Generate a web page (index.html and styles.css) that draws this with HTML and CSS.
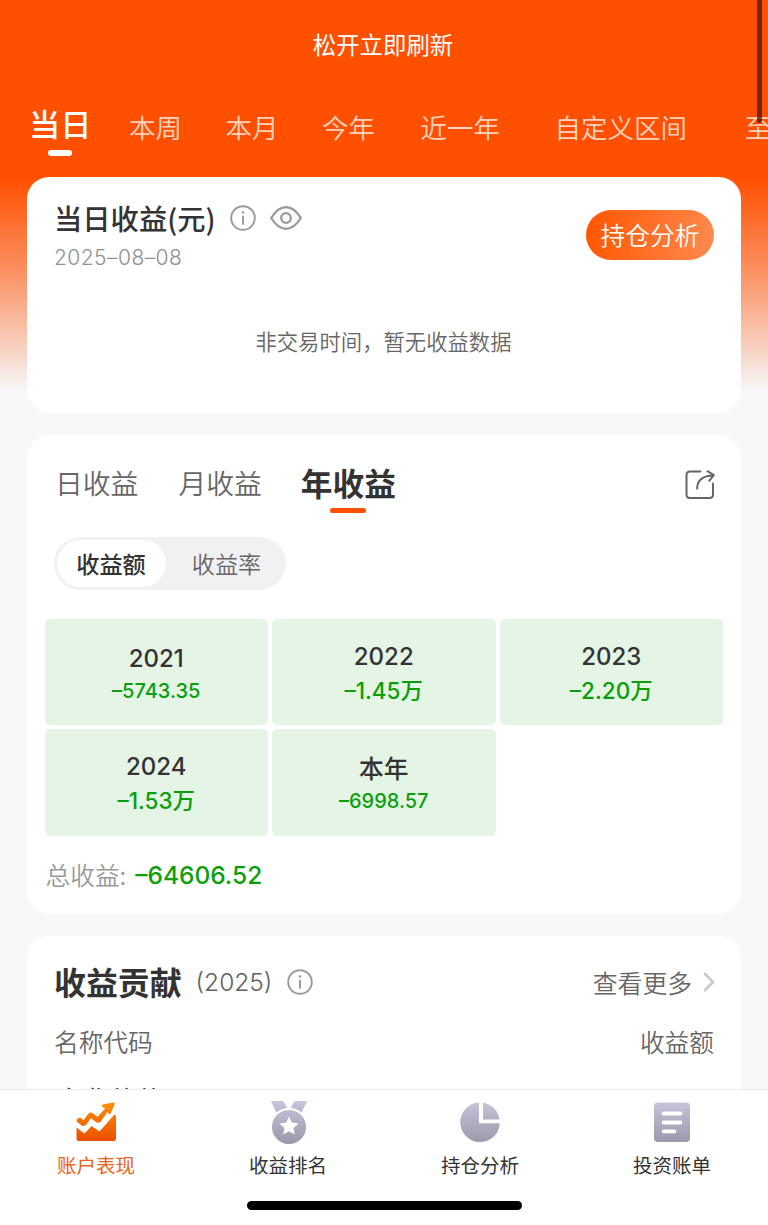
FILE: index.html
```html
<!DOCTYPE html>
<html lang="zh-CN">
<head>
<meta charset="utf-8">
<title>账户表现</title>
<link rel="stylesheet" href="styles.css">
</head>
<body>
<div class="app">
  <div class="scrollbar"></div>
  <main class="page">
    <p class="refresh">松开立即刷新</p>
    <nav class="periods">
      <a class="period period-active">当日</a>
      <a class="period">本周</a>
      <a class="period">本月</a>
      <a class="period">今年</a>
      <a class="period period-year">近一年</a>
      <a class="period period-custom">自定义区间</a>
      <a class="period period-last">至</a>
    </nav>

    <section class="card today">
      <div class="today-head">
        <div>
          <div class="today-title">
            <h2>当日收益(元)</h2>
            <svg class="info" viewBox="0 0 26 26"><circle cx="13" cy="13" r="11.8"/><path d="M13 10.800v9"/><circle class="dot" cx="13" cy="7.400" r="1.200"/></svg>
            <svg class="eye" viewBox="0 0 32 24"><path d="M1.200 12C5.500 5 10.500 1.200 16 1.200S26.500 5 30.800 12C26.500 19 21.500 22.800 16 22.800S5.500 19 1.200 12Z"/><circle cx="16" cy="12" r="4.800"/></svg>
          </div>
          <div class="date">2025–08–08</div>
        </div>
        <a class="analyse">持仓分析</a>
      </div>
      <p class="empty">非交易时间，暂无收益数据</p>
    </section>

    <section class="card history">
      <div class="history-head">
        <a class="range">日收益</a>
        <a class="range">月收益</a>
        <a class="range range-active">年收益</a>
        <svg class="share" viewBox="0 0 30 30"><path d="M15.500 1.500H5Q1.500 1.500 1.500 5V24.500Q1.500 28 5 28H24.500Q28 28 28 24.500V13.500"/><path d="M12.200 18.500C12 9.500 18 5.800 28.500 5.200M22.500 1.200L28.800 5.200L24.200 10.800"/></svg>
      </div>
      <div class="segment">
        <span class="seg seg-on">收益额</span>
        <span class="seg">收益率</span>
      </div>
      <div class="years">
        <div class="year year-exact"><b>2021</b><i>–5743.35</i></div>
        <div class="year"><b>2022</b><i>–1.45<em>万</em></i></div>
        <div class="year"><b>2023</b><i>–2.20<em>万</em></i></div>
        <div class="year"><b>2024</b><i>–1.53<em>万</em></i></div>
        <div class="year year-exact"><b class="han">本年</b><i>–6998.57</i></div>
      </div>
      <div class="total"><span>总收益:</span><strong>–64606.52</strong></div>
    </section>

    <section class="card contrib">
      <div class="contrib-head">
        <h2>收益贡献</h2>
        <span class="contrib-year">(2025)</span>
        <svg class="info" viewBox="0 0 26 26"><circle cx="13" cy="13" r="11.800"/><path d="M13 10.800v9"/><circle class="dot" cx="13" cy="7.400" r="1.200"/></svg>
        <a class="more">查看更多</a>
        <svg class="chevron" viewBox="0 0 12 20"><path d="M1.200 1L10 10L1.200 19"/></svg>
      </div>
      <div class="columns"><span>名称代码</span><span>收益额</span></div>
      <div class="stock">东华软件</div>
    </section>
  </main>

  <footer class="tabbar">
    <svg class="defs" width="0" height="0"><defs>
      <linearGradient id="warm" x1="0" y1="0" x2="0" y2="40" gradientUnits="userSpaceOnUse"><stop offset="0" stop-color="#fb9500"/><stop offset="1" stop-color="#eb5000"/></linearGradient>
      <linearGradient id="cool" x1="0" y1="0" x2="0" y2="42" gradientUnits="userSpaceOnUse"><stop offset="0" stop-color="#c8c6dc"/><stop offset="1" stop-color="#9b99aa"/></linearGradient>
    </defs></svg>
    <div class="tabs">
      <a class="tab tab-on">
        <svg viewBox="0 0 44 44"><g fill="url(#warm)"><path d="M2.500 27.500L10.500 33.500L17.500 26L25.500 31.500L39.500 15.500Q42 13.500 42 17V38.500Q42 41 39.500 41H5Q2.500 41 2.500 38.500Z"/><path d="M2.600 21.500C2.600 18 5.500 16.700 7.700 18.600L9.500 20.200L14 14.200Q16 11.300 19 13.400L23.600 16.700L31.200 8.600L28.300 6.800Q27 5 29.500 4.200L39.500 2.600Q41.300 2.600 40.600 4.500L36.600 13.400Q35.300 15 34.400 13.300L33.800 11.500L27 21.200Q24.800 24 22 21.900L17 18.300L12.300 24.600Q9.800 27.400 7 24.900Z"/></g></svg>
        <span>账户表现</span>
      </a>
      <a class="tab">
        <svg viewBox="-1 0 44 44"><g fill="url(#cool)"><path d="M4.500 1H15.500Q16.500 1 17 2L20.300 8Q14 8.800 9.500 12.500L4.200 2Z M39.500 1H28.500Q27.500 1 27 2L23.700 8Q30 8.800 34.500 12.500L39.800 2Z"/><path fill-rule="evenodd" d="M22 10A17 17 0 1 1 21.990 10ZM22 16.500L19.200 22.600L12.500 23.400L17.500 28L16.200 34.600L22 31.300L27.800 34.600L26.500 28L31.500 23.400L24.800 22.600Z"/></g></svg>
        <span>收益排名</span>
      </a>
      <a class="tab">
        <svg viewBox="0 0 44 44"><g fill="url(#cool)"><path d="M21 2.500V23.300H41.800A19.800 19.800 0 1 1 21 2.500Z"/><path d="M25 2.700A19.500 19.500 0 0 1 41.500 19.500H25Z"/></g></svg>
        <span>持仓分析</span>
      </a>
      <a class="tab">
        <svg viewBox="0 0 44 44"><rect x="4" y="2.500" width="36" height="39.500" rx="4" fill="url(#cool)"/><path d="M13.500 13.500H30.500M13.500 22.500H30.500M13.500 31.300H24.500" stroke="#fff" stroke-width="3.800" stroke-linecap="round"/></svg>
        <span>投资账单</span>
      </a>
    </div>
    <div class="home"></div>
  </footer>
</div>
</body>
</html>
```

FILE: styles.css
```css
* { box-sizing: border-box; }
body, h2, p { margin: 0; }
body {
  font-family: "Noto Sans CJK SC", sans-serif;
  color: #333;
  background: #f6f8fa;
}
h2 { font-weight: 500; }
b, i, em { font-style: normal; }
svg { display: block; flex: none; fill: none; }

.app {
  position: relative;
  display: flex;
  flex-direction: column;
  width: 768px;
  height: 1225px;
  overflow: hidden;
}
.scrollbar {
  position: absolute;
  z-index: 2;
  top: -10px;
  right: 6px;
  width: 5px;
  height: 133px;
  border-radius: 3px;
  background: rgba(45, 12, 0, .65);
}
.page {
  flex: 1;
  min-height: 0;
  overflow: hidden;
  padding: 0 27px;
  background: linear-gradient(#ff5000 0, #ff5000 178px, #fb8f60 270px, #f8c9b4 338px, #f6f8fa 392px);
}

.refresh {
  margin-left: -2px;
  padding-top: 24px;
  font-size: 23.4px;
  line-height: 40px;
  text-align: center;
  color: #fff;
}
.periods {
  display: flex;
  gap: 43.5px;
  height: 113px;
  margin-right: -27px;
  padding: 44px 0 0 2px;
  overflow: hidden;
}
.period {
  flex: none;
  font-size: 26.500px;
  line-height: 38px;
  white-space: nowrap;
  font-weight: 350;
  color: rgba(255, 255, 255, .76);
}
.period-active {
  display: flex;
  flex-direction: column;
  align-items: center;
  gap: 8px;
  margin-top: -4px;
  margin-right: -6px;
  font-size: 31.200px;
  font-weight: 500;
  color: #fff;
}
.period-active::after {
  content: "";
  width: 24px;
  height: 6px;
  border-radius: 3px;
  background: #fff;
}
.period-year { margin-left: 2px; }
.period-custom { margin-left: 11px; }
.period-last { margin-left: 14.500px; }

.card {
  margin-bottom: 22px;
  border-radius: 22px;
  background: #fff;
}

.today { height: 236px; padding: 20px 27px; }
.today-head { display: flex; justify-content: space-between; }
.today-title { display: flex; align-items: center; height: 42px; }
.today-title h2 { font-size: 28.300px; line-height: 42px; white-space: nowrap; }
.info { width: 26px; height: 26px; margin-left: 14px; stroke: #999; stroke-width: 1.900; }
.info .dot { fill: #999; stroke: none; }
.eye { width: 32px; height: 24px; margin-left: 14px; stroke: #999; stroke-width: 2.300; }
.date {
  font: 300 21px/38px Inter, sans-serif;
  letter-spacing: .45px;
  color: #909090;
}
.analyse {
  width: 128px;
  height: 50px;
  margin-top: 13px;
  border-radius: 25px;
  background: linear-gradient(100deg, #ff5500, #ff8a50);
  font-size: 24.700px;
  font-weight: 350;
  line-height: 48px;
  text-align: center;
  color: #fff;
}
.empty {
  margin-left: -1px;
  padding-top: 44px;
  font-size: 21.350px;
  font-weight: 350;
  line-height: 40px;
  text-align: center;
  color: #666;
}

.history { height: 479px; padding: 27px 17.500px 0; }
.history-head {
  display: flex;
  align-items: flex-start;
  height: 75px;
  padding: 0 9px 0 10.500px;
}
.range {
  margin-right: 40px;
  font-size: 27.800px;
  font-weight: 350;
  line-height: 41px;
  color: #666;
}
.range-active {
  display: flex;
  flex-direction: column;
  align-items: center;
  gap: 5px;
  margin-right: auto;
  margin-left: -1px;
  font-size: 31.700px;
  font-weight: 700;
  color: #333;
}
.range-active::after {
  content: "";
  width: 36px;
  height: 5px;
  border-radius: 3px;
  background: #ff5000;
}
.share {
  width: 30px;
  height: 30px;
  margin-top: 8px;
  stroke: #666;
  stroke-width: 2;
  stroke-linecap: round;
  stroke-linejoin: round;
}
.segment {
  display: flex;
  width: 232px;
  height: 53px;
  margin-left: 9px;
  padding: 3px;
  border-radius: 27px;
  background: #f1f1f4;
}
.seg {
  flex: none;
  width: 109px;
  border-radius: 24px;
  font-size: 23.200px;
  font-weight: 350;
  line-height: 46px;
  text-align: center;
  color: #666;
}
.seg + .seg { width: 122px; }
.seg-on { background: #fff; font-weight: 500; color: #333; }
.years {
  display: grid;
  grid-template-columns: repeat(3, 223.500px);
  grid-auto-rows: 106.500px;
  gap: 4px;
  margin-top: 28.500px;
}
.year {
  display: flex;
  flex-direction: column;
  align-items: center;
  padding-top: 20px;
  border-radius: 5px;
  background: #e4f4e5;
  font-family: Inter, sans-serif;
}
.year b { font-weight: 500; font-size: 24px; line-height: 35px; }
.year b.han { font-family: "Noto Sans CJK SC", sans-serif; font-size: 24.700px; line-height: 32px; margin-bottom: 3px; }
.year i { font-size: 22.500px; line-height: 34px; font-weight: 500; color: #0a9f0a; }
.year em { font-family: "Noto Sans CJK SC", sans-serif; line-height: 1; }
.year-exact { padding-top: 22px; }
.year-exact i { font-size: 20px; line-height: 30px; }
.total {
  display: flex;
  align-items: center;
  gap: 9px;
  margin-top: 18px;
  padding-left: 1px;
  font-size: 24.700px;
  line-height: 40px;
  color: #999;
}
.total span { font-weight: 350; }
.total strong { padding-top: 1px; font-family: Inter, sans-serif; font-size: 24.500px; font-weight: 500; color: #0a9f0a; }

.contrib { height: 300px; margin: 0; padding: 25px 27px; }
.contrib-head { display: flex; align-items: center; height: 42px; }
.contrib-head h2 { padding-bottom: 2px; font-size: 31.900px; line-height: 40px; font-weight: 700; }
.contrib-year {
  margin-left: 14px;
  font: 300 24.500px/42px Inter, sans-serif;
  color: #606060;
}
.contrib .info { margin-left: 15px; }
.more { margin-left: auto; padding-bottom: 1px; font-size: 24.800px; font-weight: 350; line-height: 40px; color: #666; }
.chevron { width: 12px; height: 20px; margin-right: -1px; margin-left: 11px; stroke: #c8c8c8; stroke-width: 2.600; }
.columns {
  display: flex;
  justify-content: space-between;
  padding-top: 18px;
  font-size: 24.700px;
  font-weight: 350;
  line-height: 40px;
  color: #666;
}
.stock { padding-left: 3px; padding-top: 17.500px; font-size: 26.500px; line-height: 40px; }

.tabbar {
  flex: none;
  height: 136px;
  border-top: 1px solid #e9eaed;
  background: #fff;
}
.defs { position: absolute; }
.tabs { display: grid; grid-template-columns: repeat(4, 192px); height: 111px; }
.tab {
  display: flex;
  flex-direction: column;
  align-items: center;
  padding-top: 10px;
  font-size: 19.500px;
  line-height: 30px;
}
.tab svg { width: 44px; height: 44px; margin-bottom: 6px; }
.tab-on { color: #e8641b; }
.home {
  width: 275px;
  height: 9px;
  margin: 0 auto;
  border-radius: 5px;
  background: #000;
}
```
